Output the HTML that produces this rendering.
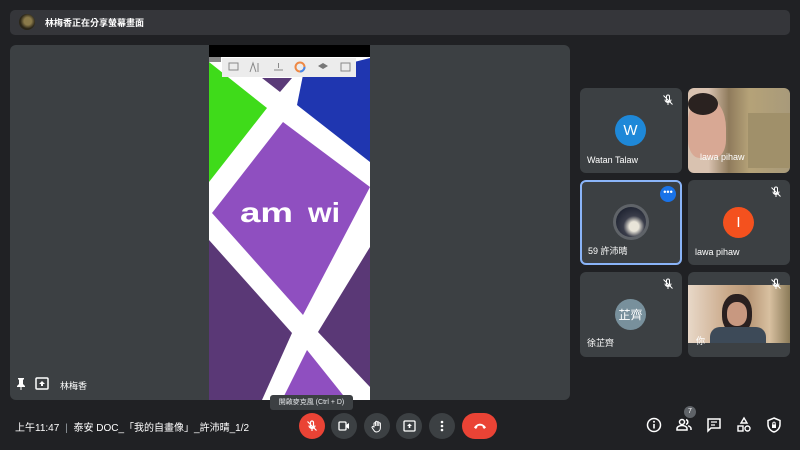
<!DOCTYPE html>
<html><head><meta charset="utf-8">
<style>
*{margin:0;padding:0;box-sizing:border-box}
body{width:800px;height:450px;background:#202124;font-family:"Liberation Sans","Noto Sans CJK TC",sans-serif;color:#e8eaed;position:relative;overflow:hidden}
.abs{position:absolute}
.topbar{left:10px;top:10px;width:780px;height:25px;background:#35363a;border-radius:5px}
.main{left:10px;top:45px;width:560px;height:355px;background:#3c4043;border-radius:6px;overflow:hidden}
.tile{background:#3c4043;border-radius:6px;overflow:hidden;width:102px;height:85px}
.name{position:absolute;left:7px;bottom:8px;font-size:9px;color:#fff}
.av{position:absolute;left:35px;top:27px;width:31px;height:31px;border-radius:50%;color:#fff;font-size:15px;display:flex;align-items:center;justify-content:center}
.mute{position:absolute;right:8px;top:6px;width:12px;height:12px}
.btn{position:absolute;top:413px;width:26px;height:26px;border-radius:50%;background:#3c4043;display:flex;align-items:center;justify-content:center}
.ic{position:absolute;top:416px;width:18px;height:18px}
</style></head><body>

<div class="abs topbar">
  <div class="abs" style="left:9px;top:4px;width:16px;height:16px;border-radius:50%;background:radial-gradient(circle at 55% 45%,#8a7a4a 0 30%,#2b2618 60%)"></div>
  <div class="abs" style="left:35px;top:6px;font-size:9px;color:#fff;font-weight:bold">林梅香正在分享螢幕畫面</div>
</div>

<div class="abs main">
  <svg class="abs" style="left:199px;top:0" width="161" height="355" viewBox="209 45 161 355">
    <rect x="209" y="45" width="161" height="355" fill="#fff"/>
    <rect x="209" y="45" width="161" height="12" fill="#000"/>
    <polygon points="209,62 267,108 209,182" fill="#3fdb1a"/>
    <polygon points="303,75 370,58 370,162 297,105" fill="#1f36b0"/>
    <polygon points="262,78 292,78 280,92" fill="#5a3a78"/>
    <polygon points="283,122 370,187 303,315 212,213" fill="#8f4fc0"/>
    <polygon points="209,240 292,333 262,400 209,400" fill="#5a3876"/>
    <polygon points="370,247 318,332 370,387" fill="#5a3876"/>
    <polygon points="307,350 347,400 282,400" fill="#8f4fc0"/>
    <rect x="222" y="58" width="134" height="19" fill="#ececec"/>
    <rect x="209" y="57" width="12" height="5" fill="#888"/>
    <g fill="none" stroke="#888" stroke-width="1">
      <rect x="229" y="63" width="9" height="7"/>
      <path d="M250 72l3-9 3 9M258 63v9"/>
      <path d="M274 70h9M278.5 63v5"/>
      <rect x="341" y="63" width="9" height="8"/>
    </g>
    <circle cx="300" cy="67" r="4.5" fill="none" stroke="#e84" stroke-width="2"/>
    <circle cx="300" cy="67" r="4.5" fill="none" stroke="#48e" stroke-width="2" stroke-dasharray="7 21"/>
    <path d="M318 66l5-3 5 3-5 3z" fill="#777"/>
    <text x="240" y="222" font-family="Liberation Sans" font-weight="bold" font-size="28" fill="#fff" textLength="53" lengthAdjust="spacingAndGlyphs">am</text>
    <text x="308" y="222" font-family="Liberation Sans" font-weight="bold" font-size="28" fill="#fff" textLength="32" lengthAdjust="spacingAndGlyphs">wi</text>
  </svg>
  <svg class="abs" style="left:6px;top:333px" width="10" height="12" viewBox="0 0 10 12"><path d="M2 0h6v1l-1 1v4l2 2v1H5.5v3h-1V9H1V8l2-2V2L2 1z" fill="#fff"/></svg>
  <svg class="abs" style="left:25px;top:332px" width="14" height="13" viewBox="0 0 14 13"><rect x="1" y="1" width="12" height="11" rx="1" fill="none" stroke="#fff" stroke-width="1.5"/><path d="M7 4l3 3H8v2H6V7H4z" fill="#fff"/></svg>
  <div class="abs" style="left:50px;top:334px;font-size:9px;color:#fff">林梅香</div>
</div>

<div class="abs tile" style="left:580px;top:88px">
  <svg class="mute" viewBox="0 0 12 12"><path d="M6 1a1.5 1.5 0 011.5 1.5V6a1.5 1.5 0 01-3 0V2.5A1.5 1.5 0 016 1zM3 5.5a3 3 0 006 0M6 8.5V11M1.5 1.5l9 9" fill="none" stroke="#fff" stroke-width="1"/></svg>
  <div class="av" style="background:#1e88d8">W</div>
  <div class="name">Watan Talaw</div>
</div>
<div class="abs tile" style="left:688px;top:88px;background:linear-gradient(90deg,#d9c2b0 0 20%,#8f7b5c 40%,#b5a278 60%,#a89a7a 100%)">
  <div class="abs" style="left:0;top:10px;width:38px;height:60px;border-radius:40% 50% 30% 30%;background:#d8a894"></div>
  <div class="abs" style="left:0;top:5px;width:30px;height:22px;border-radius:50%;background:#2a2220"></div>
  <div class="abs" style="left:60px;top:25px;width:42px;height:55px;background:#a0906a"></div>
  <div class="abs" style="left:12px;top:64px;font-size:9px;color:#fff">lawa pihaw</div>
</div>
<div class="abs tile" style="left:580px;top:180px;border:2px solid #8ab4f8">
  <div class="abs" style="right:4px;top:4px;width:16px;height:16px;border-radius:50%;background:#1a73e8;color:#fff;font-size:9px;line-height:12px;text-align:center">•••</div>
  <div class="abs" style="left:31px;top:22px;width:36px;height:36px;border-radius:50%;background:#5f6368;padding:3px"><div style="width:100%;height:100%;border-radius:50%;background:radial-gradient(circle at 60% 65%,#e8e4d8 0 18%,#3a3d4a 40%,#1d2230 80%)"></div></div>
  <div class="name" style="left:6px;bottom:6px">59 許沛晴</div>
</div>
<div class="abs tile" style="left:688px;top:180px">
  <svg class="mute" viewBox="0 0 12 12"><path d="M6 1a1.5 1.5 0 011.5 1.5V6a1.5 1.5 0 01-3 0V2.5A1.5 1.5 0 016 1zM3 5.5a3 3 0 006 0M6 8.5V11M1.5 1.5l9 9" fill="none" stroke="#fff" stroke-width="1"/></svg>
  <div class="av" style="background:#f4511e">I</div>
  <div class="name">lawa pihaw</div>
</div>
<div class="abs tile" style="left:580px;top:272px">
  <svg class="mute" viewBox="0 0 12 12"><path d="M6 1a1.5 1.5 0 011.5 1.5V6a1.5 1.5 0 01-3 0V2.5A1.5 1.5 0 016 1zM3 5.5a3 3 0 006 0M6 8.5V11M1.5 1.5l9 9" fill="none" stroke="#fff" stroke-width="1"/></svg>
  <div class="av" style="background:#78909c;font-size:12px">芷齊</div>
  <div class="name">徐芷齊</div>
</div>
<div class="abs tile" style="left:688px;top:272px">
  <div class="abs" style="left:0;top:13px;width:102px;height:58px;background:linear-gradient(90deg,#e8d8c8,#c9a888 40%,#b89878 60%,#d8c0a0 80%,#8a7a58)"></div>
  <div class="abs" style="left:34px;top:22px;width:30px;height:40px;border-radius:45%;background:#2a2020"></div>
  <div class="abs" style="left:39px;top:30px;width:20px;height:24px;border-radius:45%;background:#c89880"></div>
  <div class="abs" style="left:22px;top:55px;width:56px;height:16px;border-radius:10px 10px 0 0;background:#3d4a58"></div>
  <svg class="mute" viewBox="0 0 12 12"><path d="M6 1a1.5 1.5 0 011.5 1.5V6a1.5 1.5 0 01-3 0V2.5A1.5 1.5 0 016 1zM3 5.5a3 3 0 006 0M6 8.5V11M1.5 1.5l9 9" fill="none" stroke="#fff" stroke-width="1"/></svg>
  <div class="abs" style="left:8px;top:62px;font-size:9px;color:#fff">你</div>
</div>

<div class="abs" style="left:270px;top:395px;width:83px;height:15px;background:#3c4043;border-radius:3px;font-size:7px;color:#e8eaed;text-align:center;line-height:15px">開啟麥克風 (Ctrl + D)</div>

<div class="abs" style="left:15px;top:419px;font-size:10px;color:#fff">上午11:47 <span style="color:#9aa0a6;margin:0 3px">|</span> 泰安 DOC_「我的自畫像」_許沛晴_1/2</div>

<div class="btn" style="left:299px;background:#ea4335"><svg width="12" height="12" viewBox="0 0 12 12"><path d="M6 1a1.5 1.5 0 011.5 1.5V6a1.5 1.5 0 01-3 0V2.5A1.5 1.5 0 016 1zM3 5.5a3 3 0 006 0M6 8.5V11M1.5 1.5l9 9" fill="none" stroke="#fff" stroke-width="1.2"/></svg></div>
<div class="btn" style="left:331px"><svg width="12" height="10" viewBox="0 0 12 10"><rect x="1" y="1" width="7" height="8" rx="1" fill="none" stroke="#fff" stroke-width="1.3"/><path d="M8 4l3-2v6L8 6z" fill="#fff"/></svg></div>
<div class="btn" style="left:364px"><svg width="12" height="13" viewBox="0 0 12 13"><path d="M3 7V3.5a.8.8 0 011.6 0V6V2a.8.8 0 011.6 0v4V2.5a.8.8 0 011.6 0V6V3.5a.8.8 0 011.6 0V8a4 4 0 01-4 4H5.5A3 3 0 013 10.5L1 7.5a.8.8 0 011.3-.8z" fill="none" stroke="#fff" stroke-width="1"/></svg></div>
<div class="btn" style="left:396px"><svg width="13" height="12" viewBox="0 0 13 12"><rect x="1" y="1" width="11" height="10" rx="1" fill="none" stroke="#fff" stroke-width="1.3"/><path d="M6.5 3.5l2.5 2.5H7.3v2H5.7v-2H4z" fill="#fff"/></svg></div>
<div class="btn" style="left:429px"><svg width="4" height="12" viewBox="0 0 4 12"><circle cx="2" cy="2" r="1.3" fill="#fff"/><circle cx="2" cy="6" r="1.3" fill="#fff"/><circle cx="2" cy="10" r="1.3" fill="#fff"/></svg></div>
<div class="btn" style="left:462px;width:35px;border-radius:13px;background:#ea4335"><svg width="14" height="7" viewBox="0 0 14 7"><path d="M1 4.5C4-.5 10-.5 13 4.5L11 6 9.5 4V3C8 2.5 6 2.5 4.5 3v1L3 6z" fill="#fff"/></svg></div>

<svg class="ic" style="left:645px" viewBox="0 0 18 18"><circle cx="9" cy="9" r="6.5" fill="none" stroke="#fff" stroke-width="1.5"/><rect x="8.2" y="8" width="1.6" height="4.5" fill="#fff"/><circle cx="9" cy="5.8" r="1" fill="#fff"/></svg>
<div class="abs" style="left:684px;top:406px;width:12px;height:12px;border-radius:50%;background:#5f6368;font-size:7px;color:#fff;text-align:center;line-height:12px">7</div>
<svg class="ic" style="left:675px" viewBox="0 0 18 18"><circle cx="7" cy="6" r="2.5" fill="none" stroke="#fff" stroke-width="1.5"/><path d="M2 14v-1.5c0-2 3-3 5-3s5 1 5 3V14z" fill="none" stroke="#fff" stroke-width="1.5"/><path d="M11 3.6a2.5 2.5 0 010 4.8M13 9.8c1.5.5 3 1.3 3 2.7V14" fill="none" stroke="#fff" stroke-width="1.5"/></svg>
<svg class="ic" style="left:705px" viewBox="0 0 18 18"><path d="M3 3h12v9H6l-3 3z" fill="none" stroke="#fff" stroke-width="1.5"/><path d="M6 6h6M6 9h4" stroke="#fff" stroke-width="1.3"/></svg>
<svg class="ic" style="left:735px" viewBox="0 0 18 18"><path d="M9 2l3 5H6z" fill="none" stroke="#fff" stroke-width="1.4"/><rect x="3" y="10" width="5" height="5" fill="none" stroke="#fff" stroke-width="1.4"/><circle cx="12.5" cy="12.5" r="2.5" fill="none" stroke="#fff" stroke-width="1.4"/></svg>
<svg class="ic" style="left:765px" viewBox="0 0 18 18"><path d="M9 2l6 2.5v4c0 3.5-2.5 6.5-6 7.5-3.5-1-6-4-6-7.5v-4z" fill="none" stroke="#fff" stroke-width="1.5"/><rect x="7" y="8.5" width="4" height="3.5" fill="#fff"/><path d="M7.8 8.5V7.3a1.2 1.2 0 012.4 0v1.2" fill="none" stroke="#fff" stroke-width="1"/></svg>

</body></html>
